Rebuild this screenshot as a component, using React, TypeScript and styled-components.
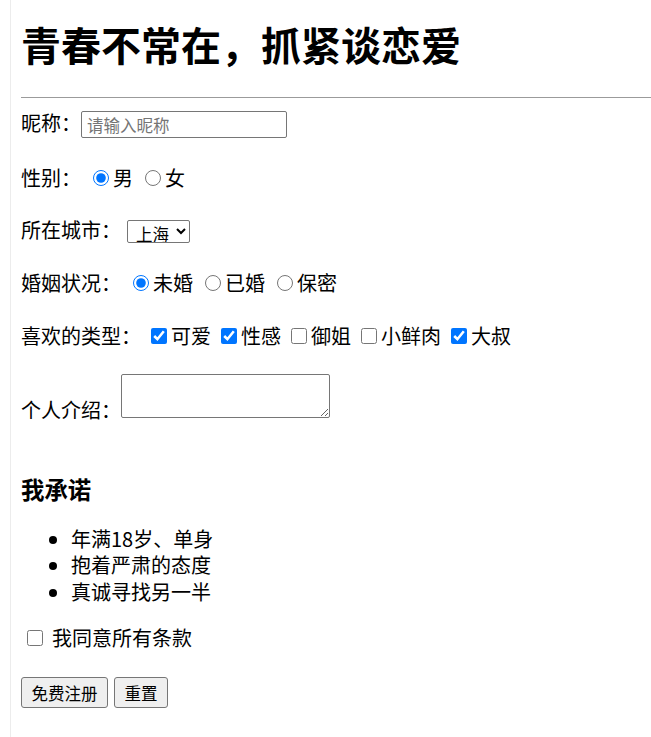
import React from 'react'
import styled, { createGlobalStyle } from 'styled-components'

const GlobalStyle = createGlobalStyle`
    body {
        margin: 0;
        background: #fff;
        color: #000;
        font-family: 'Microsoft YaHei', 'Noto Sans CJK SC', 'Noto Sans', sans-serif;
    }
`

const Page = styled.div`
    margin-left: 10px;
    border-left: 1px solid #ececec;
    padding: 19px 0 30px 10px;
    min-height: 100vh;
    box-sizing: border-box;
`

const Title = styled.h1`
    margin: 0;
    font-size: 40px;
    line-height: 50px;
    font-weight: bold;
`

const Divider = styled.hr`
    margin: 28px 0 0;
    height: 0;
    border: 0;
    border-top: 1px solid #9b9b9b;
`

const Row = styled.div<{ $top: number }>`
    display: flex;
    align-items: center;
    height: 32px;
    margin-top: ${props => props.$top}px;
    font-size: 20px;
    line-height: 32px;
    white-space: nowrap;
`

const TextInput = styled.input`
    box-sizing: border-box;
    width: 206px;
    height: 27px;
    margin: 3px 0 0;
    padding: 0 5px;
    border: 1px solid #767676;
    border-radius: 2px;
    font-family: inherit;
    font-size: 16.5px;
    outline: none;

    &::placeholder {
        color: #757575;
    }
`

const Choice = styled.label`
    display: inline-flex;
    align-items: center;
`

const Radio = styled.input.attrs({ type: 'radio' })`
    width: 16px;
    height: 16px;
    margin: 0 4px 0 12px;
`

const Check = styled.input.attrs({ type: 'checkbox' })`
    width: 16px;
    height: 16px;
    margin: 0 4px 0 10px;
`

const AgreeCheck = styled(Check)`
    margin: 0 9px 0 6px;
`

const CitySelect = styled.select`
    box-sizing: border-box;
    width: 63px;
    height: 23px;
    margin: 2px 0 0 6px;
    padding: 0 0 0 4px;
    border: 1px solid #767676;
    border-radius: 2px;
    background: #fff;
    color: #000;
    font-family: inherit;
    font-size: 16.5px;
`

const IntroRow = styled.div`
    display: flex;
    align-items: flex-end;
    margin-top: 22px;
    font-size: 20px;
    line-height: 26px;
`

const IntroBox = styled.textarea`
    box-sizing: border-box;
    width: 209px;
    height: 44px;
    margin: 0 0 5px;
    border: 1px solid #767676;
    border-radius: 2px;
`

const PledgeTitle = styled.h3`
    margin: 51px 0 0;
    font-size: 23.4px;
    line-height: 30px;
    font-weight: bold;
`

const PledgeList = styled.ul`
    margin: 22px 0 0;
    padding-left: 50px;
    font-size: 20px;
    line-height: 26.4px;
`

const ButtonBar = styled.div`
    display: flex;
    gap: 6px;
    margin-top: 23px;
`

const Button = styled.button`
    height: 31px;
    padding: 0 9.5px;
    border: 1px solid #767676;
    border-radius: 3px;
    background: #efefef;
    color: #000;
    font-family: inherit;
    font-size: 16.5px;
`

const types = [
    { name: '可爱', checked: true },
    { name: '性感', checked: true },
    { name: '御姐', checked: false },
    { name: '小鲜肉', checked: false },
    { name: '大叔', checked: true },
]

const App = () => {
    return (
        <>
            <GlobalStyle />
            <Page>
                <Title>青春不常在，抓紧谈恋爱</Title>
                <Divider />
                <Row $top={9}>
                    昵称：<TextInput placeholder='请输入昵称' />
                </Row>
                <Row $top={23}>
                    性别：
                    <Choice><Radio name='sex' defaultChecked />男</Choice>
                    <Choice><Radio name='sex' />女</Choice>
                </Row>
                <Row $top={20}>
                    所在城市：
                    <CitySelect defaultValue='上海'>
                        <option>北京</option>
                        <option>上海</option>
                        <option>广州</option>
                        <option>深圳</option>
                    </CitySelect>
                </Row>
                <Row $top={21}>
                    婚姻状况：
                    <Choice><Radio name='marry' defaultChecked />未婚</Choice>
                    <Choice><Radio name='marry' />已婚</Choice>
                    <Choice><Radio name='marry' />保密</Choice>
                </Row>
                <Row $top={21}>
                    喜欢的类型：
                    {types.map(t => (
                        <Choice key={t.name}><Check defaultChecked={t.checked} />{t.name}</Choice>
                    ))}
                </Row>
                <IntroRow>
                    个人介绍：<IntroBox />
                </IntroRow>
                <PledgeTitle>我承诺</PledgeTitle>
                <PledgeList>
                    <li>年满18岁、单身</li>
                    <li>抱着严肃的态度</li>
                    <li>真诚寻找另一半</li>
                </PledgeList>
                <Row $top={17}>
                    <Choice><AgreeCheck />我同意所有条款</Choice>
                </Row>
                <ButtonBar>
                    <Button type='button'>免费注册</Button>
                    <Button type='reset'>重置</Button>
                </ButtonBar>
            </Page>
        </>
    )
}

export default App
